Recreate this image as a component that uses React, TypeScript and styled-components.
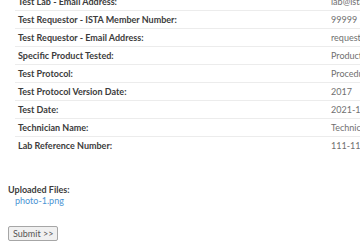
import styled, { createGlobalStyle } from "styled-components";

const GlobalStyle = createGlobalStyle`
  html, body {
    margin: 0;
    padding: 0;
    background: #fff;
    overflow: hidden;
  }
  body {
    font-family: "Lato", "Liberation Sans", sans-serif;
    font-size: 9px;
    color: #333;
  }
`;

const Page = styled.div`
  width: 360px;
  height: 250px;
  overflow: hidden;
  padding: 0 0 0 8px;
  box-sizing: border-box;
`;

const Details = styled.div`
  margin: -8px 0 0 7px;
  width: 420px;
`;

const Row = styled.div<{ $first?: boolean }>`
  display: grid;
  grid-template-columns: 316px 1fr;
  height: 18px;
  align-items: center;
  border-top: ${(p) => (p.$first ? "none" : "1px solid #ececec")};
  box-sizing: border-box;
`;

const Label = styled.div`
  padding-left: 3px;
  font-weight: 700;
  color: #3c3c3c;
  white-space: nowrap;
`;

const Value = styled.div`
  color: #707070;
  white-space: nowrap;
`;

const Uploads = styled.div`
  margin-top: 30px;
`;

const UploadsTitle = styled.div`
  font-weight: 700;
  color: #3c3c3c;
  line-height: 11px;
`;

const FileLink = styled.a`
  display: block;
  margin-left: 7px;
  color: #4a94d4;
  text-decoration: none;
  line-height: 11px;
`;

const SubmitButton = styled.button`
  display: block;
  margin-top: 20px;
  height: 15px;
  padding: 0 4px;
  font-family: "Lato", "Liberation Sans", sans-serif;
  font-size: 9px;
  color: #555;
  background: #f0f0f0;
  border: 1px solid #a6a6a6;
  border-radius: 2px;
`;

const rows = [
  ["Test Lab - Email Address:", "lab@ista.org"],
  ["Test Requestor - ISTA Member Number:", "99999"],
  ["Test Requestor - Email Address:", "requestor@ista.org"],
  ["Specific Product Tested:", "Product X"],
  ["Test Protocol:", "Procedure 1A"],
  ["Test Protocol Version Date:", "2017"],
  ["Test Date:", "2021-12-01"],
  ["Technician Name:", "Technician A"],
  ["Lab Reference Number:", "111-111"],
];

export default function App() {
  return (
    <>
      <GlobalStyle />
      <Page>
        <Details>
          {rows.map(([label, value], i) => (
            <Row key={label} $first={i === 0}>
              <Label>{label}</Label>
              <Value>{value}</Value>
            </Row>
          ))}
        </Details>
        <Uploads>
          <UploadsTitle>Uploaded Files:</UploadsTitle>
          <FileLink href="#">photo-1.png</FileLink>
        </Uploads>
        <SubmitButton type="button">Submit &gt;&gt;</SubmitButton>
      </Page>
    </>
  );
}
